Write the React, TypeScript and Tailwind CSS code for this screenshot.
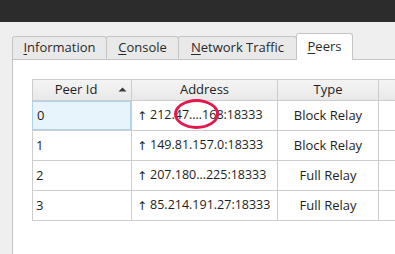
import React from "react";

const rows = [
  { id: "0", addr: "212.47.…168:18333", type: "Block Relay", sel: true },
  { id: "1", addr: "149.81.157.0:18333", type: "Block Relay" },
  { id: "2", addr: "207.180…225:18333", type: "Full Relay" },
  { id: "3", addr: "85.214.191.27:18333", type: "Full Relay" },
];

function Tab({ u, rest, w, first }: { u: string; rest: string; w: string; first?: boolean }) {
  return (
    <div
      className={`${w} h-[23px] ${first ? "" : "-ml-px"} border border-b-0 border-[#c4c4c4] rounded-t-[3px] bg-[#e9e9e9] flex items-center justify-center text-[13px] text-[#2a2a2a]`}
    >
      <span>
        <span className="underline underline-offset-2">{u}</span>
        {rest}
      </span>
    </div>
  );
}

export default function App() {
  return (
    <div
      className="relative w-[395px] h-[254px] overflow-hidden bg-[#efefef]"
      style={{ fontFamily: '"Open Sans", "Noto Sans", sans-serif' }}
    >
      <div className="h-[22px] bg-[#2c2c2c]" />
      <div className="pt-[11px] pl-[12px]">
        <div className="flex items-end h-[26px]">
          <Tab u="I" rest="nformation" w="w-[95px]" first />
          <Tab u="C" rest="onsole" w="w-[73px]" />
          <Tab u="N" rest="etwork Traffic" w="w-[119px]" />
          <div className="relative z-10 -ml-px -mb-px w-[57px] h-[27px] border border-b-0 border-[#c4c4c4] rounded-t-[3px] bg-white flex items-center justify-center text-[13px] text-[#2a2a2a]">
            <span>
              <span className="underline underline-offset-2">P</span>eers
            </span>
          </div>
        </div>
        <div className="h-[260px] bg-white border-t border-l border-[#c4c4c4] pl-[19px] pt-[19px]">
          <div className="border-t border-l border-[#cdcdcd] text-[13px] text-[#1e1e1e]">
            <div className="flex h-[21px] border-b border-[#cdcdcd] bg-gradient-to-b from-[#f4f4f4] to-[#e9e9e9]">
              <div className="w-[99px] shrink-0 border-r border-[#cdcdcd] flex items-center relative">
                <span className="w-full text-center pr-[12px]">Peer Id</span>
                <svg className="absolute right-[4px] top-[7px]" width="9" height="5" viewBox="0 0 9 5">
                  <path d="M0.5 4.5 L4.5 0.5 L8.5 4.5 Z" fill="#3a3a3a" />
                </svg>
              </div>
              <div className="w-[146px] shrink-0 border-r border-[#cdcdcd] flex items-center justify-center">Address</div>
              <div className="w-[101px] shrink-0 border-r border-[#cdcdcd] flex items-center justify-center">Type</div>
              <div className="flex-1" />
            </div>
            {rows.map((r) => (
              <div key={r.id} className="flex h-[30px] border-b border-[#cdcdcd]">
                <div className="w-[99px] shrink-0 border-r border-[#cdcdcd] flex">
                  {r.sel ? (
                    <div className="flex-1 -ml-px border border-[#b0d2ea] bg-[#e8f4fb] flex items-center pl-[4px]">{r.id}</div>
                  ) : (
                    <div className="flex-1 flex items-center pl-[3px]">{r.id}</div>
                  )}
                </div>
                <div className="w-[146px] shrink-0 border-r border-[#cdcdcd] flex items-center pl-[5px] whitespace-nowrap text-[12.5px]">
                  <span className="text-[12px] mr-[3px]" style={{ fontFamily: '"DejaVu Sans", sans-serif' }}>↑</span>
                  {r.addr}
                </div>
                <div className="w-[101px] shrink-0 border-r border-[#cdcdcd] flex items-center justify-center">{r.type}</div>
                <div className="flex-1" />
              </div>
            ))}
          </div>
        </div>
      </div>
      <div className="absolute left-[174px] top-[99px] w-[45px] h-[30px] rounded-[50%] border-[3px] border-[#e5174c]" />
    </div>
  );
}
